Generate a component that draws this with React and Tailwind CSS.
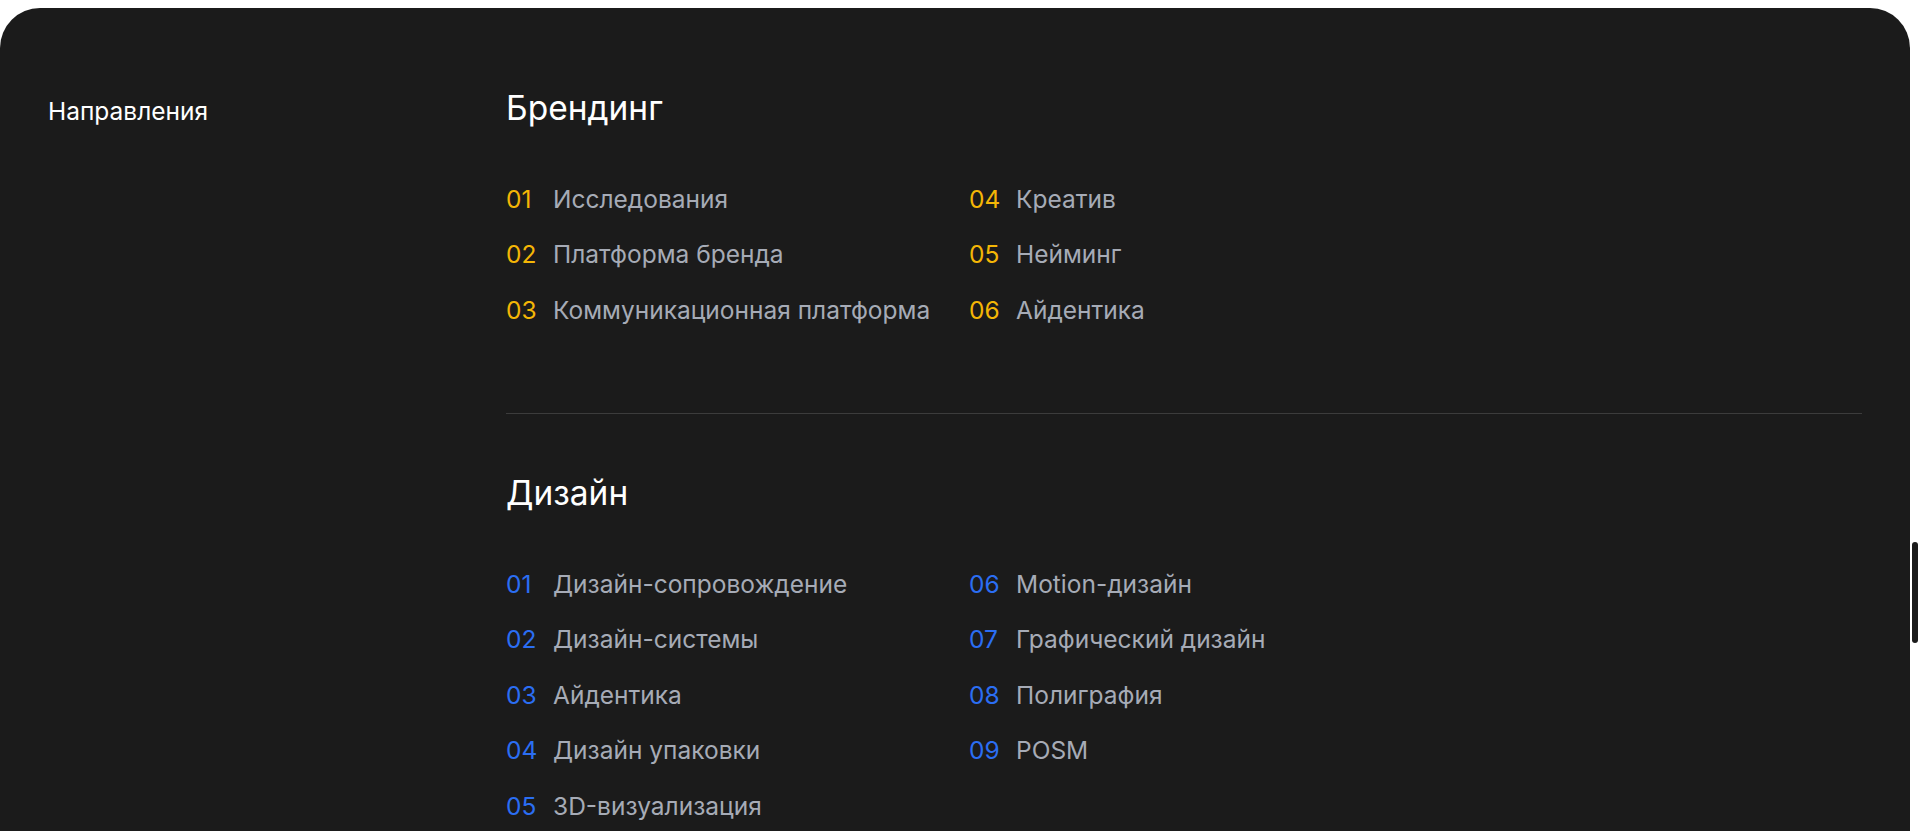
import React from 'react';

const branding = [
    [
        { n: '01', label: 'Исследования' },
        { n: '02', label: 'Платформа бренда' },
        { n: '03', label: 'Коммуникационная платформа' },
    ],
    [
        { n: '04', label: 'Креатив' },
        { n: '05', label: 'Нейминг' },
        { n: '06', label: 'Айдентика' },
    ],
];

const design = [
    [
        { n: '01', label: 'Дизайн-сопровождение' },
        { n: '02', label: 'Дизайн-системы' },
        { n: '03', label: 'Айдентика' },
        { n: '04', label: 'Дизайн упаковки' },
        { n: '05', label: '3D-визуализация' },
    ],
    [
        { n: '06', label: 'Motion-дизайн' },
        { n: '07', label: 'Графический дизайн' },
        { n: '08', label: 'Полиграфия' },
        { n: '09', label: 'POSM' },
    ],
];

const ServiceList = ({ columns, accent }) => (
    <div className="mt-[43px] flex">
        {columns.map((col, i) => (
            <ul key={i} className="w-[463px]">
                {col.map((item) => (
                    <li key={item.n} className="flex h-[55.6px] items-center text-[24.5px] leading-[32px]">
                        <span className={`w-[47px] shrink-0 ${accent}`}>{item.n}</span>
                        <span className="text-[#a6abb6]">{item.label}</span>
                    </li>
                ))}
            </ul>
        ))}
    </div>
);

export default function App() {
    return (
        <div className="relative h-[831px] w-[1920px] overflow-hidden bg-white" style={{ fontFamily: 'Inter, "Noto Sans", sans-serif' }}>
            <section className="mt-[8px] flex h-[823px] w-[1910px] rounded-t-[40px] bg-[#1b1b1b] pl-[48px] text-white">
                {/* sidebar label */}
                <aside className="w-[458px] shrink-0 pt-[89px]">
                    <h3 className="text-[24.5px] leading-[28px]">Направления</h3>
                </aside>

                {/* service groups */}
                <div className="w-[1356px] pt-[80px]">
                    <h2 className="text-[33.5px] leading-[40px]">Брендинг</h2>
                    <ServiceList columns={branding} accent="text-[#f4b606]" />

                    <div className="mt-[75px] h-px bg-[#3c3c3c]" />

                    <h2 className="mt-[59px] text-[33.5px] leading-[40px]">Дизайн</h2>
                    <ServiceList columns={design} accent="text-[#2b6ef3]" />
                </div>
            </section>

            {/* page scrollbar thumb */}
            <div className="absolute left-[1912px] top-[542px] h-[101px] w-[6px] rounded-full bg-[#1b1b1b]" />
        </div>
    );
}
